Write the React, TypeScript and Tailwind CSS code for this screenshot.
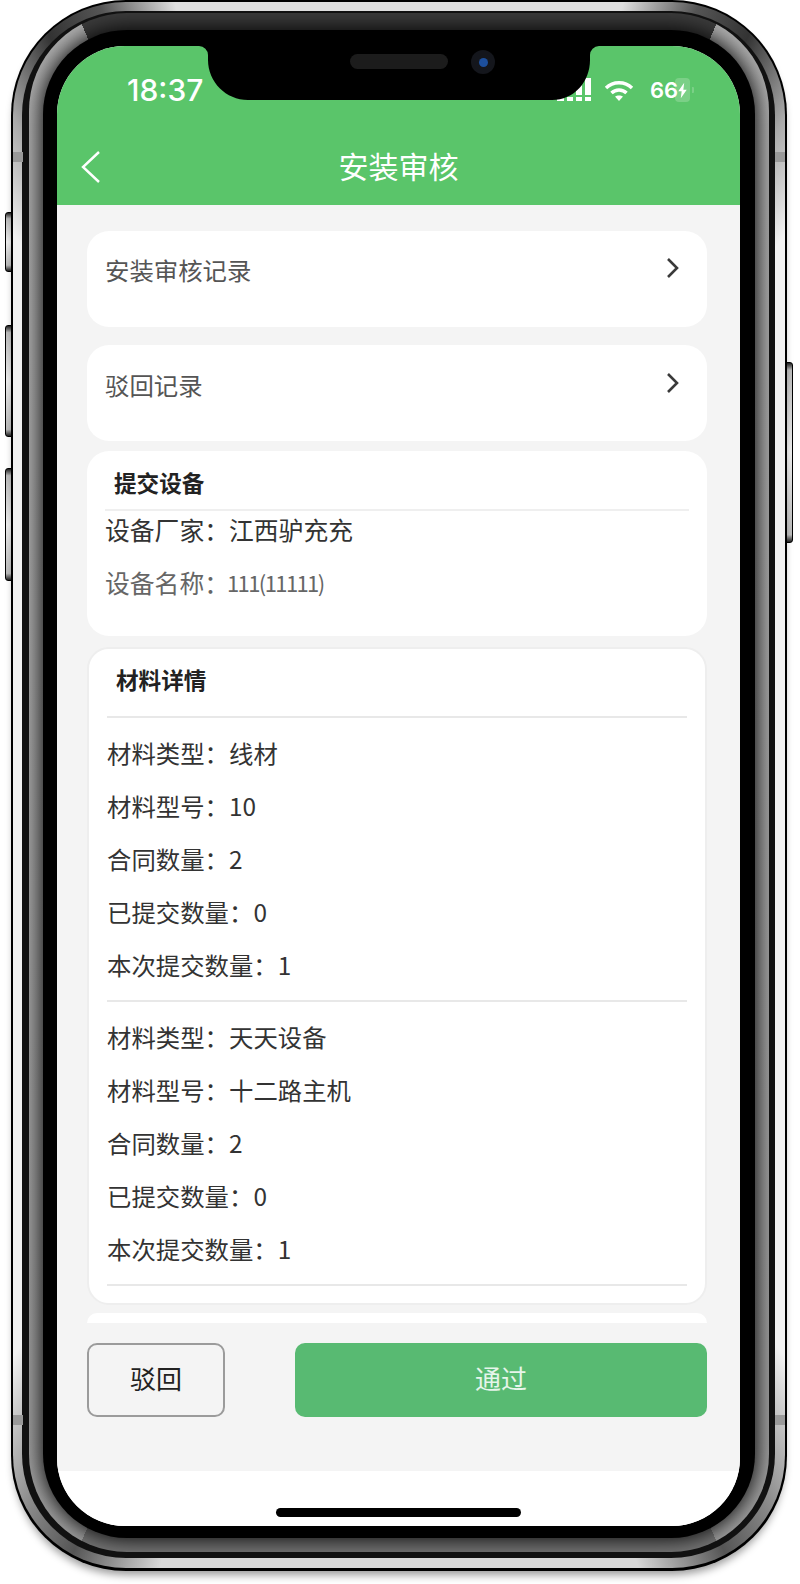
const materials = [
  [
    ["材料类型", "线材"],
    ["材料型号", "10"],
    ["合同数量", "2"],
    ["已提交数量", "0"],
    ["本次提交数量", "1"],
  ],
  [
    ["材料类型", "天天设备"],
    ["材料型号", "十二路主机"],
    ["合同数量", "2"],
    ["已提交数量", "0"],
    ["本次提交数量", "1"],
  ],
];

function LinkCard({ label, top }: { label: string; top: string }) {
  return (
    <div className={`flex h-[96px] items-start justify-between rounded-[22px] bg-white pl-[18px] pr-[28px] ${top}`}>
      <span className="text-[24.4px] leading-[36px] text-[#555]">{label}</span>
      <svg className="mt-[5px]" width="13" height="22" viewBox="0 0 13 22" fill="none">
        <path d="M2 2l9 9-9 9" stroke="#3a3a3a" strokeWidth="2.6" />
      </svg>
    </div>
  );
}

function Notch() {
  return (
    <svg className="absolute left-[139px] top-0" width="408" height="55" viewBox="0 0 408 55">
      <path
        d="M3 0A9 9 0 0 1 12 9V14C12 36 30 54 52 54H356C378 54 394 36 394 14V9A9 9 0 0 1 403 0Z"
        fill="#000"
      />
    </svg>
  );
}

function StatusBar() {
  return (
    <div className="relative h-[75px] font-['Inter',sans-serif] text-white">
      <span className="absolute left-[70px] top-[26px] text-[30px] font-medium leading-[36px]">18:37</span>
      <svg className="absolute left-[498px] top-[31px]" width="36" height="25" viewBox="0 0 36 25" fill="#fff">
        <rect x="2" y="20" width="7" height="4" />
        <rect x="12" y="20" width="6" height="4" />
        <rect x="21" y="20" width="6" height="4" />
        <rect x="30" y="20" width="6" height="4" />
        <rect x="21" y="8" width="6" height="10" />
        <rect x="30" y="1" width="6" height="17" />
      </svg>
      <svg className="absolute left-[547px] top-[34px]" width="30" height="22" viewBox="0 0 30 22" fill="none" stroke="#fff" strokeWidth="3.4">
        <path d="M2 8C9 1 21 1 28 8" />
        <path d="M7.500 13C11.500 9 18.500 9 22.500 13" />
        <path d="M15 21l-4-4.500C13 15 17 15 19 16.500z" fill="#fff" stroke="none" />
      </svg>
      <span className="absolute left-[593px] top-[31px] text-[22px] font-semibold leading-[26px]">66</span>
      <div className="absolute left-[618px] top-[32px] h-[24px] w-[15px] rounded-[4px] bg-white/20" />
      <div className="absolute left-[635px] top-[41px] h-[6px] w-[2px] rounded-r-[1px] bg-white/20" />
      <svg className="absolute left-[620px] top-[36px]" width="11" height="17" viewBox="0 0 12 20" fill="#fff">
        <path d="M8 1L1 11h4l-1 8 7-10H7z" />
      </svg>
    </div>
  );
}

export default function App() {
  return (
    <div className="relative h-[1584px] w-[800px] overflow-hidden bg-white font-['Noto_Sans_CJK_SC','Noto_Sans',sans-serif]">
      {/* side buttons */}
      <div className="absolute left-[5px] top-[212px] h-[60px] w-[8px] rounded-l-[3px] border border-black bg-[linear-gradient(180deg,#222,#bbb_10%,#eee_50%,#bbb_90%,#222)]" />
      <div className="absolute left-[5px] top-[325px] h-[112px] w-[8px] rounded-l-[3px] border border-black bg-[linear-gradient(180deg,#222,#bbb_6%,#eee_50%,#bbb_94%,#222)]" />
      <div className="absolute left-[5px] top-[468px] h-[113px] w-[8px] rounded-l-[3px] border border-black bg-[linear-gradient(180deg,#222,#bbb_6%,#eee_50%,#bbb_94%,#222)]" />
      <div className="absolute left-[785px] top-[362px] h-[181px] w-[8px] rounded-r-[3px] border border-black bg-[linear-gradient(180deg,#222,#bbb_4%,#eee_50%,#bbb_96%,#222)]" />

      {/* phone body */}
      <div className="relative ml-[11px] h-[1571px] w-[776px] rounded-[115px] bg-black pb-[3px] pl-[2px] pr-[2px] pt-[2px] shadow-[0_7px_8px_-3px_rgba(0,0,0,0.4)]">
        <div className="h-full rounded-[113px] bg-[conic-gradient(#dedede_0deg,#dedede_16deg,#555_21deg,#333_25deg,#aaa_30deg,#f2f2f2_35deg,#f2f2f2_146deg,#888_153deg,#555_157deg,#d8d8d8_163deg,#d8d8d8_197deg,#555_203deg,#888_207deg,#f2f2f2_214deg,#f2f2f2_325deg,#aaa_330deg,#333_335deg,#555_339deg,#dedede_344deg,#dedede_360deg)] pb-[10px] pl-[9px] pr-[10px] pt-[9px]">
          <div className="h-full rounded-[104px] bg-[#111] pb-[6px] pl-[7px] pr-[6px] pt-[2px]">
            <div className="h-full overflow-hidden rounded-[98px] bg-[conic-gradient(#3c3c3c_0deg,#3c3c3c_22.700deg,#b0b0b0_22.700deg,#a0a0a0_157.300deg,#777_157.300deg,#777_202.700deg,#a0a0a0_202.700deg,#b0b0b0_337.300deg,#3c3c3c_337.300deg)] pb-[14px] pl-[14px] pr-[14px] pt-[17px]">
              <div className="h-full rounded-[84px] bg-black pb-[12px] pl-[14px] pr-[15px] pt-[16px] shadow-[0_0_22px_1px_#000]">
                {/* screen */}
                <div className="relative flex h-full flex-col overflow-hidden rounded-[68px] bg-white">
                  <header className="h-[159px] shrink-0 bg-[#5ac56a]">
                    <StatusBar />
                    <div className="relative flex h-[84px] items-start justify-center pt-[22px] text-white">
                      <svg className="absolute left-[24px] top-[30px]" width="20" height="32" viewBox="0 0 20 32" fill="none">
                        <path d="M18 1L2 16l16 15" stroke="#fff" strokeWidth="2.400" />
                      </svg>
                      <span className="text-[30px] leading-[44px]">安装审核</span>
                    </div>
                  </header>

                  <div className="flex flex-1 flex-col bg-[#f4f4f4] pl-[30px] pr-[33px] pt-[26px]">
                    <LinkCard label="安装审核记录" top="pt-[21px]" />
                    <div className="mt-[18px]">
                      <LinkCard label="驳回记录" top="pt-[22px]" />
                    </div>

                    <div className="mt-[10px] h-[185px] rounded-[22px] bg-white pl-[18px] pr-[18px]">
                      <div className="flex h-[60px] items-end border-b-2 border-[#efefef] pb-[10px] pl-[9px] text-[22.600px] font-bold leading-[32px] text-[#222]">
                        提交设备
                      </div>
                      <div className="flex flex-col gap-[17px] text-[24.800px] leading-[36px]">
                        <div className="text-[#333]">设备厂家：江西驴充充</div>
                        <div className="flex items-center text-[#666]">
                          设备名称：<span className="-ml-[2px] text-[22px] tracking-[-1.600px]">111(11111)</span>
                        </div>
                      </div>
                    </div>

                    <div className="mt-[11px] h-[658px] rounded-[22px] border-2 border-[#eeeeee] bg-white pl-[18px] pr-[18px]">
                      <div className="flex h-[69px] items-center border-b-2 border-[#e8e8e8] pb-[6px] pl-[9px] text-[22.600px] font-bold leading-[32px] text-[#222]">
                        材料详情
                      </div>
                      {materials.map((rows, i) => (
                        <div key={i} className="border-b-2 border-[#e8e8e8] pb-[8px] pt-[9px]">
                          {rows.map(([name, value]) => (
                            <div key={name} className="flex h-[53px] items-center text-[24.400px] text-[#333]">
                              {name}：{value}
                            </div>
                          ))}
                        </div>
                      ))}
                    </div>

                    <div className="mt-[8px] h-[10px] shrink-0 rounded-t-[20px] bg-white" />

                    <div className="mt-[20px] flex justify-between">
                      <button className="h-[74px] w-[138px] rounded-[10px] border-2 border-[#9b9b9b] pb-[6px] text-[26px] text-[#222]">
                        驳回
                      </button>
                      <button className="h-[74px] w-[412px] rounded-[10px] bg-[#58ba72] pb-[6px] text-[26px] text-white/85">
                        通过
                      </button>
                    </div>
                  </div>

                  <div className="flex h-[55px] shrink-0 items-start justify-center bg-white pt-[37px]">
                    <div className="h-[9px] w-[245px] rounded-full bg-black" />
                  </div>

                  <Notch />
                  {/* speaker and camera */}
                  <div className="absolute left-[293px] top-[8px] h-[15px] w-[98px] rounded-full bg-[#1c1c1c]" />
                  <div className="absolute left-[414px] top-[4px] flex h-[24px] w-[24px] items-center justify-center rounded-full bg-[#14161c]">
                    <div className="h-[9px] w-[9px] rounded-full bg-[#1d4f9c]" />
                  </div>
                </div>
              </div>
            </div>
          </div>
        </div>
      </div>

      {/* antenna bands */}
      <div className="absolute left-[13px] top-[152px] h-[10px] w-[10px] bg-[#999]" />
      <div className="absolute left-[775px] top-[152px] h-[10px] w-[10px] bg-[#999]" />
      <div className="absolute left-[13px] top-[1415px] h-[10px] w-[10px] bg-[#999]" />
      <div className="absolute left-[775px] top-[1415px] h-[10px] w-[10px] bg-[#999]" />
    </div>
  );
}
